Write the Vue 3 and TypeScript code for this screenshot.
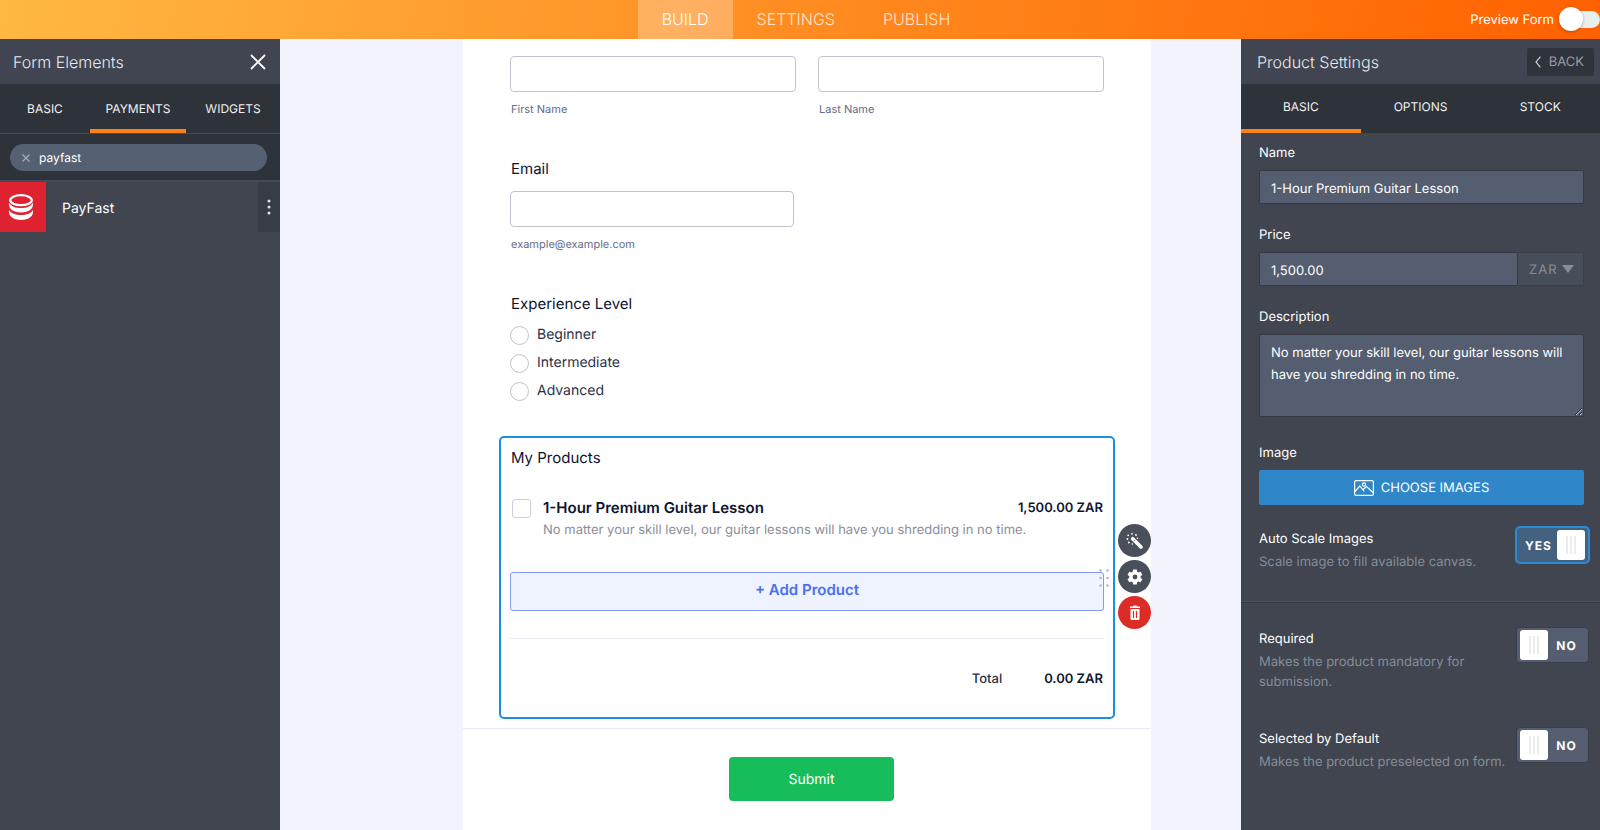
<script setup lang="ts">
import { ref } from 'vue'

interface Toggle {
  id: string
  title: string
  note: string
  on: boolean
}

const mainTabs = ['BUILD', 'SETTINGS', 'PUBLISH']
const elementTabs = ['BASIC', 'PAYMENTS', 'WIDGETS']
const settingTabs = ['BASIC', 'OPTIONS', 'STOCK']
const activeMain = ref('BUILD')
const activeElement = ref('PAYMENTS')
const activeSetting = ref('BASIC')

const preview = ref(false)
const search = ref('payfast')
const levels = ['Beginner', 'Intermediate', 'Advanced']
const level = ref('')
const picked = ref(false)

const productName = ref('1-Hour Premium Guitar Lesson')
const price = ref('1,500.00')
const currency = ref('ZAR')
const description = ref('No matter your skill level, our guitar lessons will have you shredding in no time.')

const scaling = ref<Toggle[]>([
  { id: 'auto-scale', title: 'Auto Scale Images', note: 'Scale image to fill available canvas.', on: true },
])
const rules = ref<Toggle[]>([
  { id: 'required', title: 'Required', note: 'Makes the product mandatory for submission.', on: false },
  { id: 'preselected', title: 'Selected by Default', note: 'Makes the product preselected on form.', on: false },
])
</script>

<template>
  <div class="app">
    <header class="topbar">
      <div class="side"></div>
      <nav class="main-tabs" aria-label="Builder">
        <button
          v-for="t in mainTabs"
          :key="t"
          type="button"
          :class="{ active: t === activeMain }"
          @click="activeMain = t"
        >{{ t }}</button>
      </nav>
      <div class="side preview">
        <label for="preview">Preview Form</label>
        <input id="preview" v-model="preview" type="checkbox" role="switch" />
      </div>
    </header>

    <div class="body">
      <aside class="panel elements">
        <div class="panel-head">
          <h2>Form Elements</h2>
          <button class="close" type="button" aria-label="Close">
            <svg width="16" height="16" viewBox="0 0 16 16"><path d="M1 1 15 15M15 1 1 15" stroke="#fff" stroke-width="1.8" fill="none" /></svg>
          </button>
        </div>
        <nav class="tabs element-tabs" aria-label="Element types">
          <button
            v-for="t in elementTabs"
            :key="t"
            type="button"
            :class="{ active: t === activeElement }"
            @click="activeElement = t"
          >{{ t }}</button>
        </nav>
        <div class="search">
          <div class="pill">
            <button type="button" aria-label="Clear search" @click="search = ''">
              <svg width="8" height="8" viewBox="0 0 8 8"><path d="M.5.5l7 7M7.5.5l-7 7" stroke="#a3adbd" stroke-width="1.3" fill="none" /></svg>
            </button>
            <input v-model="search" type="text" aria-label="Search elements" />
          </div>
        </div>
        <div class="element">
          <span class="element-icon">
            <svg width="26" height="28" viewBox="0 0 26 28">
              <ellipse cx="13" cy="7.2" rx="10.8" ry="5" fill="none" stroke="#fff" stroke-width="2.2" />
              <path d="M1 9.500c2 4 6.500 5.600 12 5.600s10-1.600 12-5.600c1 6.500-4.500 10-12 10S0 16 1 9.500z" fill="#fff" />
              <path d="M1 17c2 3.600 6.500 5 12 5s10-1.400 12-5c1 6.300-4.500 10-12 10S0 23.300 1 17z" fill="#fff" />
            </svg>
          </span>
          <span class="element-name">PayFast</span>
          <button class="element-menu" type="button" aria-label="More">
            <svg width="4" height="16" viewBox="0 0 4 16" fill="#dfe2e8"><circle cx="2" cy="2" r="1.500" /><circle cx="2" cy="8" r="1.500" /><circle cx="2" cy="14" r="1.500" /></svg>
          </button>
        </div>
      </aside>

      <main class="canvas">
        <form class="page" @submit.prevent>
          <div class="fields">
            <div class="name-row">
              <div class="field">
                <input id="first" class="box" type="text" />
                <label class="sub" for="first">First Name</label>
              </div>
              <div class="field">
                <input id="last" class="box" type="text" />
                <label class="sub" for="last">Last Name</label>
              </div>
            </div>

            <div class="field email">
              <label class="title" for="email">Email</label>
              <input id="email" class="box" type="email" />
              <span class="sub">example@example.com</span>
            </div>

            <fieldset class="levels">
              <legend class="title">Experience Level</legend>
              <label v-for="l in levels" :key="l">
                <input v-model="level" type="radio" name="level" :value="l" />
                <span>{{ l }}</span>
              </label>
            </fieldset>

            <section class="products">
              <h3 class="title">My Products</h3>
              <div class="product">
                <input id="lesson" v-model="picked" type="checkbox" />
                <div class="product-text">
                  <div class="product-line">
                    <label for="lesson">{{ productName }}</label>
                    <span class="amount">1,500.00 ZAR</span>
                  </div>
                  <p>{{ description }}</p>
                </div>
              </div>
              <button class="add" type="button">+ Add Product</button>
              <div class="total">
                <span>Total</span>
                <span class="amount">0.00 ZAR</span>
              </div>
              <svg class="grip" width="10" height="18" viewBox="0 0 10 18" fill="#b4b9c9">
                <circle cx="1.500" cy="1.500" r="1.300" /><circle cx="8.500" cy="1.500" r="1.300" />
                <circle cx="1.500" cy="9" r="1.300" /><circle cx="8.500" cy="9" r="1.300" />
                <circle cx="1.500" cy="16.500" r="1.300" /><circle cx="8.500" cy="16.500" r="1.300" />
              </svg>
              <div class="actions">
                <button type="button" aria-label="Wizard">
                  <svg width="18" height="18" viewBox="0 0 18 18">
                    <path d="M6.700 6.700 15 15" stroke="#fff" stroke-width="3.600" stroke-linecap="round" />
                    <path d="M7.900 9.300 9.300 7.900" stroke="#4a505b" stroke-width=".8" />
                    <g fill="#fff"><circle cx="6" cy="1.800" r=".9" /><circle cx="2.200" cy="3.300" r=".9" /><circle cx="1.400" cy="7" r=".9" /><circle cx="2.800" cy="10.500" r=".9" /><circle cx="6.300" cy="12" r=".8" /><circle cx="10" cy="3" r=".9" /><circle cx="11.500" cy="6.200" r=".8" /></g>
                  </svg>
                </button>
                <button type="button" aria-label="Properties">
                  <svg width="18" height="18" viewBox="0 0 24 24" fill="#fff"><path d="M19.400 13c0-.3.1-.6.1-1s0-.7-.1-1l2.100-1.700c.2-.1.200-.4.100-.6l-2-3.500c-.1-.2-.4-.3-.6-.2l-2.500 1c-.5-.4-1.100-.7-1.700-1l-.4-2.600c0-.2-.2-.4-.5-.4h-4c-.2 0-.5.200-.5.400L9 5c-.6.300-1.200.6-1.700 1l-2.500-1c-.2-.1-.5 0-.6.200l-2 3.500c-.1.200-.1.500.1.600L4.400 11c0 .3-.1.600-.1 1s0 .7.100 1l-2.100 1.700c-.2.100-.2.400-.1.600l2 3.500c.1.200.4.300.6.200l2.500-1c.5.400 1.100.7 1.700 1l.4 2.600c0 .2.200.4.500.4h4c.2 0 .5-.2.500-.4l.4-2.600c.6-.3 1.200-.6 1.700-1l2.500 1c.2.1.500 0 .6-.2l2-3.500c.1-.2.1-.5-.1-.6zM12 15.200a3.200 3.200 0 1 1 0-6.400 3.200 3.200 0 0 1 0 6.400z" /></svg>
                </button>
                <button class="danger" type="button" aria-label="Delete">
                  <svg width="12" height="16" viewBox="0 0 12 16"><path d="M1 1.500h3L4.600.5h2.800L8 1.500h3v1.600H1zM1.500 4h9v9.700c0 .8-.6 1.300-1.300 1.300H2.800c-.7 0-1.300-.5-1.300-1.300z" fill="#fff" /><path d="M4.500 6v7M7.500 6v7" stroke="#dc2c27" stroke-width="1.200" /></svg>
                </button>
              </div>
            </section>
          </div>
          <div class="footer">
            <button class="submit" type="submit">Submit</button>
          </div>
        </form>
      </main>

      <aside class="panel settings">
        <div class="panel-head">
          <h2>Product Settings</h2>
          <button class="back" type="button">
            <svg width="6" height="12" viewBox="0 0 6 12"><path d="M5.400.6 1 6l4.400 5.400" stroke="#c6c9cf" stroke-width="1.200" fill="none" /></svg>
            BACK
          </button>
        </div>
        <nav class="tabs setting-tabs" aria-label="Product settings">
          <button
            v-for="t in settingTabs"
            :key="t"
            type="button"
            :class="{ active: t === activeSetting }"
            @click="activeSetting = t"
          >{{ t }}</button>
        </nav>

        <div class="group">
          <div class="setting">
            <label for="p-name">Name</label>
            <input id="p-name" v-model="productName" class="dark" type="text" />
          </div>
          <div class="setting">
            <label for="p-price">Price</label>
            <div class="price">
              <input id="p-price" v-model="price" class="dark" type="text" />
              <span class="currency">
                <select v-model="currency" aria-label="Currency">
                  <option>ZAR</option>
                </select>
                <svg width="12" height="8" viewBox="0 0 12 8"><path d="M0 0h12L6 8z" fill="#868d97" /></svg>
              </span>
            </div>
          </div>
          <div class="setting">
            <label for="p-desc">Description</label>
            <textarea id="p-desc" v-model="description" class="dark"></textarea>
          </div>
          <div class="setting image">
            <span>Image</span>
            <button class="choose" type="button">
              <svg width="20" height="16" viewBox="0 0 20 16" fill="none" stroke="#fff" stroke-width="1.200">
                <rect x=".6" y=".6" width="18.800" height="14.800" rx="1.500" />
                <circle cx="10" cy="4.500" r="1.600" />
                <path d="M1 11.500 5.800 6l4.400 5.500M8.800 9.700l3.700-3.200L19 12.500" />
              </svg>
              CHOOSE IMAGES
            </button>
          </div>
        </div>

        <div
          v-for="(set, i) in [scaling, rules]"
          :key="i"
          class="group toggles"
          :class="{ split: i > 0 }"
        >
          <div v-for="s in set" :key="s.id" class="toggle">
            <div class="toggle-text">
              <label :for="s.id">{{ s.title }}</label>
              <p>{{ s.note }}</p>
            </div>
            <label class="switch" :class="{ on: s.on }">
              <input :id="s.id" v-model="s.on" type="checkbox" role="switch" />
              <span class="state">{{ s.on ? 'YES' : 'NO' }}</span>
              <span class="knob"><i></i><i></i><i></i></span>
            </label>
          </div>
        </div>
      </aside>
    </div>
  </div>
</template>

<style>
body {
  margin: 0;
}
</style>

<style scoped>
* {
  box-sizing: border-box;
}
.app {
  display: flex;
  flex-direction: column;
  height: 100vh;
  overflow: hidden;
  font-family: Inter, "Liberation Sans", sans-serif;
  text-rendering: geometricPrecision;
  color: #0a1551;
}
button,
input,
select,
textarea {
  font: inherit;
  text-rendering: inherit;
  color: inherit;
  margin: 0;
}
button {
  border: 0;
  padding: 0;
  background: none;
  cursor: pointer;
}
h2,
h3,
p {
  margin: 0;
  font-weight: 400;
}
svg {
  display: block;
  flex: none;
}

/* Top bar */
.topbar {
  display: flex;
  height: 39px;
  flex: none;
  background: linear-gradient(100deg, #ffb842, #ff6100);
  color: #fff;
}
.side {
  flex: 1;
}
.main-tabs {
  display: flex;
  padding-left: 12px;
}
.main-tabs button {
  padding: 0 24px 2px;
  font-size: 16px;
  font-weight: 300;
  color: #ffe5cb;
}
.main-tabs button.active {
  background: rgba(255, 255, 255, 0.27);
  color: #fff;
}
.preview {
  display: flex;
  align-items: center;
  justify-content: flex-end;
  gap: 16px;
  font-size: 13px;
}
.preview input {
  appearance: none;
  position: relative;
  width: 30px;
  height: 17px;
  border-radius: 9px;
  background: #e9eeee;
}
.preview input::before {
  content: "";
  position: absolute;
  left: -11px;
  top: -4px;
  width: 24px;
  height: 24px;
  border-radius: 50%;
  background: #fff;
  box-shadow: 0 1px 3px rgba(60, 20, 0, 0.35);
}
.preview input:checked::before {
  left: 6px;
}

/* Side panels */
.body {
  display: flex;
  flex: 1;
  min-height: 0;
}
.panel {
  flex: none;
  background: #40454f;
  color: #fff;
}
.elements {
  width: 280px;
}
.settings {
  width: 359px;
}
.panel-head {
  display: flex;
  align-items: center;
  justify-content: space-between;
  height: 45px;
  padding: 0 14px 0 13px;
  background: #404551;
}
.panel-head h2 {
  font-size: 16px;
  font-weight: 300;
  color: #e8e9ec;
}
.settings .panel-head {
  padding: 0 6px 0 16px;
}
.back {
  display: flex;
  align-items: center;
  gap: 8px;
  height: 28px;
  padding: 0 10px 0 8px;
  border-radius: 2px;
  background: #2f333b;
  color: #979ba3;
  font-size: 13px;
  line-height: 18px;
}
.tabs {
  display: flex;
  height: 49px;
  background: #2e3239;
  font-size: 12px;
}
.tabs button {
  border-top: 4px solid transparent;
  border-bottom: 4px solid transparent;
  color: #eeeff1;
}
.tabs button.active {
  border-bottom-color: #ff8217;
}
.element-tabs button {
  flex: 92 1 0;
}
.element-tabs button:first-child {
  flex-grow: 88;
}
.element-tabs button.active {
  flex-grow: 94;
}
.setting-tabs button {
  flex: 1;
  padding-bottom: 4px;
}
.search {
  padding: 10px 13px 9px 10px;
  border: solid #444b57;
  border-width: 1px 0 2px;
  background: #2e3239;
}
.pill {
  display: flex;
  align-items: center;
  gap: 9px;
  height: 27px;
  padding: 0 12px;
  border-radius: 14px;
  background: #556072;
}
.pill input {
  flex: 1;
  min-width: 0;
  padding: 0;
  border: 0;
  outline: 0;
  background: none;
  font-size: 12px;
}
.element {
  display: flex;
  align-items: center;
  height: 50px;
}
.element-icon {
  display: grid;
  place-items: center;
  width: 46px;
  height: 50px;
  padding-right: 4px;
  background: #de2230;
}
.element-name {
  flex: 1;
  padding: 2px 0 0 16px;
  font-size: 14px;
}
.element-menu {
  display: grid;
  place-items: center;
  width: 22px;
  height: 50px;
  background: #383c45;
}

/* Canvas */
.canvas {
  display: flex;
  flex: 1;
  min-width: 0;
  padding: 0 90px 0 183px;
  background: #f3f3fe;
}
.page {
  flex: 1;
  background: #fff;
}
.fields {
  padding: 17px 36px 9px;
  border-bottom: 1px solid #e9eaf3;
}
.name-row {
  display: grid;
  grid-template-columns: 1fr 1fr;
  gap: 22px;
  padding: 0 11px;
}
.box {
  display: block;
  width: 100%;
  height: 36px;
  padding: 0 10px;
  border: 1px solid #c0c4d1;
  border-radius: 4px;
  background: #fff;
}
.sub {
  display: block;
  margin-top: 9px;
  padding-left: 1px;
  font-size: 11px;
  line-height: 16px;
  color: #636c86;
}
.title {
  display: block;
  padding: 0 0 0 1px;
  font-size: 15px;
  line-height: 20px;
  color: #0e1430;
}
.email {
  margin: 42px 11px 0;
}
.email .box {
  width: 284px;
  margin-top: 12px;
}
.levels {
  margin: 42px 11px 0;
  padding: 0;
  border: 0;
  font-size: 14px;
}
.levels legend {
  margin-bottom: 7px;
}
.levels label {
  display: flex;
  align-items: center;
  gap: 8px;
  height: 28px;
  color: #2a3047;
}
.levels span {
  padding-bottom: 2px;
}
.levels input {
  appearance: none;
  width: 19px;
  height: 19px;
  border: 1px solid #c0c4d1;
  border-radius: 50%;
}
.levels input:checked {
  border: 6px solid #4573e3;
}
.products {
  position: relative;
  margin-top: 31px;
  padding: 10px 9px 30px;
  border: 2px solid #1c8fe0;
  border-radius: 5px;
}
.product {
  display: flex;
  align-items: flex-start;
  margin-top: 30px;
  padding-left: 2px;
}
.product input {
  appearance: none;
  width: 19px;
  height: 19px;
  margin: 1px 12px 0 0;
  border: 1px solid #ccd0de;
  border-radius: 3px;
}
.product input:checked {
  background: #4573e3;
}
.product-text {
  flex: 1;
}
.product-line {
  display: flex;
  align-items: center;
  justify-content: space-between;
}
.product-line label {
  font-size: 15px;
  line-height: 20px;
  font-weight: 600;
  color: #0e1430;
}
.product-text p {
  margin-top: 2px;
  font-size: 13px;
  line-height: 20px;
  color: #8b8e99;
}
.amount {
  padding-right: 1px;
  font-size: 13px;
  line-height: 18px;
  font-weight: 600;
  color: #0e1430;
}
.add {
  display: block;
  width: 100%;
  height: 39px;
  margin-top: 32px;
  padding-bottom: 4px;
  border: 1px solid #7f9bf5;
  border-radius: 3px;
  background: #eff3ff;
  font-size: 15px;
  font-weight: 600;
  color: #4a6ff0;
}
.total {
  display: flex;
  justify-content: flex-end;
  gap: 42px;
  margin-top: 27px;
  padding-top: 31px;
  border-top: 1px solid #e7e9f1;
  font-size: 13px;
  line-height: 18px;
  font-weight: 500;
  color: #2a3047;
}
.products .total {
  margin-bottom: -1px;
}
.grip {
  position: absolute;
  right: 4px;
  top: 131px;
}
.actions {
  position: absolute;
  left: 100%;
  top: 86px;
  display: grid;
  gap: 3px;
  margin-left: 5px;
}
.actions button {
  display: grid;
  place-items: center;
  width: 33px;
  height: 33px;
  border-radius: 50%;
  background: #4a505b;
}
.actions .danger {
  background: #dc2c27;
}
.footer {
  display: flex;
  justify-content: center;
  padding: 28px 0 29px 9px;
}
.submit {
  width: 165px;
  height: 44px;
  border-radius: 4px;
  background: #18bd5b;
  color: #fff;
  font-size: 14px;
}

/* Product settings */
.group {
  padding: 11px 16px 0 18px;
}
.setting {
  display: flex;
  flex-direction: column;
  gap: 8px;
  margin-bottom: 22px;
  font-size: 13px;
  line-height: 18px;
}
.dark {
  display: block;
  width: 100%;
  min-width: 0;
  height: 34px;
  padding: 3px 11px 0;
  border: 1px solid #343942;
  border-radius: 2px;
  background: #545e70;
  font-size: 13px;
}
textarea.dark {
  height: 83px;
  padding: 7px 11px 5px;
  line-height: 22px;
}
.price {
  display: flex;
}
.currency {
  position: relative;
  flex: none;
  width: 66px;
}
.currency select {
  appearance: none;
  width: 100%;
  height: 34px;
  padding: 2px 11px 0;
  border: 1px solid #3a4049;
  border-left: 0;
  border-radius: 0 2px 2px 0;
  background: #464e59;
  color: #868d97;
  font-size: 13px;
  letter-spacing: 1px;
}
.currency svg {
  position: absolute;
  right: 10px;
  top: 13px;
  pointer-events: none;
}
.image {
  margin: 27px 0 0;
}
.choose {
  display: flex;
  align-items: center;
  justify-content: center;
  gap: 7px;
  height: 35px;
  border-radius: 2px;
  background: #2f86c9;
  font-size: 13px;
}
.toggles {
  padding: 20px 11px 30px 18px;
}
.split {
  padding-top: 22px;
  border-top: 1px solid #353a43;
  box-shadow: 0 -1px #4a515d;
}
.toggle {
  display: flex;
  align-items: flex-start;
  justify-content: space-between;
  margin-bottom: 33px;
}
.toggles .toggle:last-child {
  margin-bottom: 0;
}
.toggle-text {
  max-width: 252px;
}
.toggle-text label {
  display: block;
  padding-top: 5px;
  font-size: 13px;
  line-height: 18px;
}
.toggle-text p {
  margin-top: 4px;
  font-size: 13px;
  line-height: 20px;
  color: #868d99;
}
.switch {
  display: flex;
  align-items: center;
  flex-direction: row-reverse;
  position: relative;
  width: 73px;
  height: 36px;
  margin-top: 2px;
  padding: 0 3px;
  border: 1px solid #3a4049;
  border-radius: 4px;
  background: #545e70;
  cursor: pointer;
}
.switch.on {
  flex-direction: row;
  border-color: #2b8bd6;
  background: #44617f;
  box-shadow: 0 0 0 1px #2b8bd6;
}
.switch input {
  appearance: none;
  position: absolute;
  inset: 0;
  cursor: pointer;
}
.state {
  flex: 1;
  text-align: center;
  font-size: 12px;
  font-weight: 700;
  letter-spacing: 1px;
}
.knob {
  display: flex;
  align-items: center;
  justify-content: center;
  gap: 2px;
  width: 28px;
  height: 30px;
  border-radius: 3px;
  background: #fff;
}
.knob i {
  width: 2px;
  height: 18px;
  background: #ececec;
}
</style>
